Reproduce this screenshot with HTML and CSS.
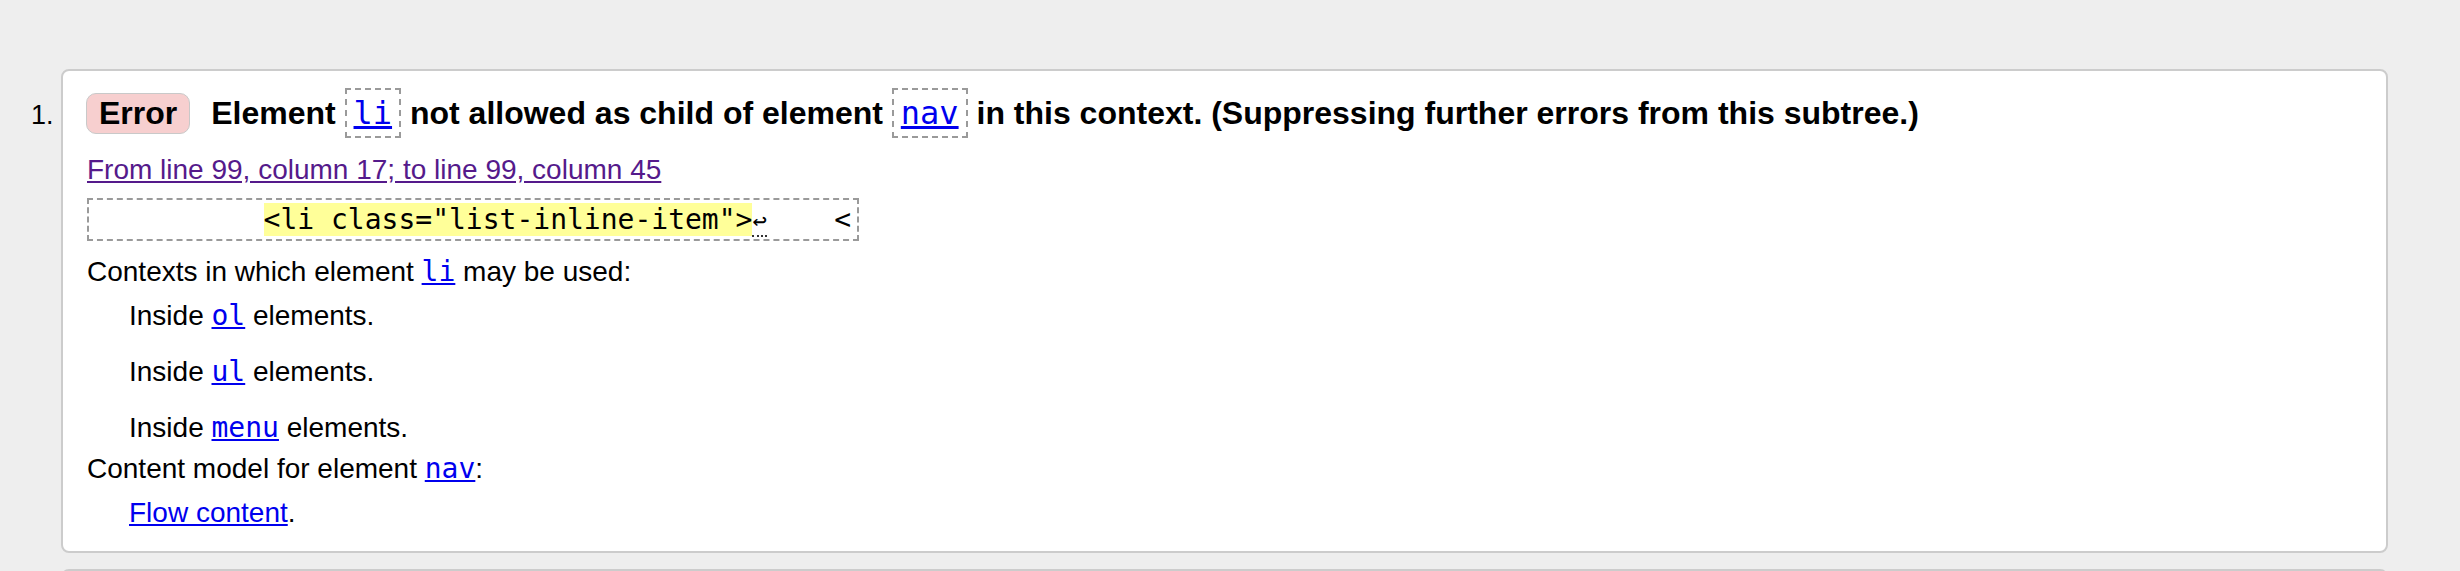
FILE: index.html
```html
<!DOCTYPE html>
<html lang="en">
<head>
<meta charset="utf-8">
<title>Validator message</title>
<link rel="stylesheet" href="styles.css">
</head>
<body>
<ol class="messages">
  <li class="msg">
    <p class="msg-head"><strong class="badge">Error</strong> <span class="msg-text">Element <code class="tag"><a href="#">li</a></code> not allowed as child of element <code class="tag"><a href="#">nav</a></code> in this context. (Suppressing further errors from this subtree.)</span></p>
    <p class="location"><a class="visited" href="#">From line 99, column 17; to line 99, column 45</a></p>
    <p class="extract"><code>          <b class="hl">&lt;li class="list-inline-item"&gt;</b><span class="lf">↩</span>    &lt;</code></p>
    <dl class="details">
      <dt>Contexts in which element <a href="#"><code>li</code></a> may be used:</dt>
      <dd>Inside <a href="#"><code>ol</code></a> elements.</dd>
      <dd>Inside <a href="#"><code>ul</code></a> elements.</dd>
      <dd>Inside <a href="#"><code>menu</code></a> elements.</dd>
      <dt>Content model for element <a href="#"><code>nav</code></a>:</dt>
      <dd class="flow"><a href="#">Flow content</a>.</dd>
    </dl>
  </li>
  <li class="msg msg-next"></li>
</ol>
</body>
</html>
```

FILE: styles.css
```css
html, body {
  margin: 0;
  padding: 0;
  background: #eeeeee;
}

body {
  font-family: "Liberation Sans", Arial, sans-serif;
  font-size: 28px;
  color: #000;
}

a {
  color: #0000ee;
  text-decoration: underline;
}

a.visited {
  color: #551a8b;
}

code {
  font-family: "DejaVu Sans Mono", monospace;
  font-size: 1em;
}

.messages {
  margin: 69px 0 0 0;
  padding: 0 72px 0 61px;
  list-style: decimal;
}

.msg {
  background: #fff;
  border: 2px solid #cccccc;
  border-radius: 8px;
  padding: 17px 24px 18px 24px;
  margin-bottom: 16px;
}

.msg::marker {
  font-family: "Liberation Sans", Arial, sans-serif;
  font-size: 27px;
}

.msg-next {
  list-style: none;
  min-height: 120px;
}

.msg-head {
  margin: 0 0 0 -1px;
  font-size: 32px;
  font-weight: bold;
  line-height: 30px;
}

.badge {
  display: inline-block;
  background: #f7cfcf;
  border: 1.5px solid #c9c9c9;
  border-radius: 10px;
  padding: 2px 12px;
  line-height: 1.1;
  margin-right: 12px;
}

.tag {
  display: inline-block;
  border: 2px dashed #9a9a9a;
  padding: 4px 7px;
  line-height: normal;
  font-weight: normal;
}

.location {
  margin: 12px 0 0 0;
  line-height: 40px;
}

.extract {
  margin: 8px 0 0 0;
}

.extract code {
  display: inline-block;
  white-space: pre;
  border: 2px dashed #9a9a9a;
  padding: 3px 6px;
  font-size: 28px;
  line-height: normal;
}

.hl {
  font-weight: normal;
  background: #ffff99;
}

.lf {
  border-bottom: 2px dotted #333;
  font-size: 24px;
}

.details {
  margin: 11px 0 0 0;
  line-height: 40px;
}

.details dt {
  margin: 0;
}

.details dd {
  margin: 4px 0 16px 42px;
}

.details dd:nth-of-type(3) {
  margin-bottom: 1px;
}

.details dd.flow {
  margin: 4px 0 0 42px;
}
```
